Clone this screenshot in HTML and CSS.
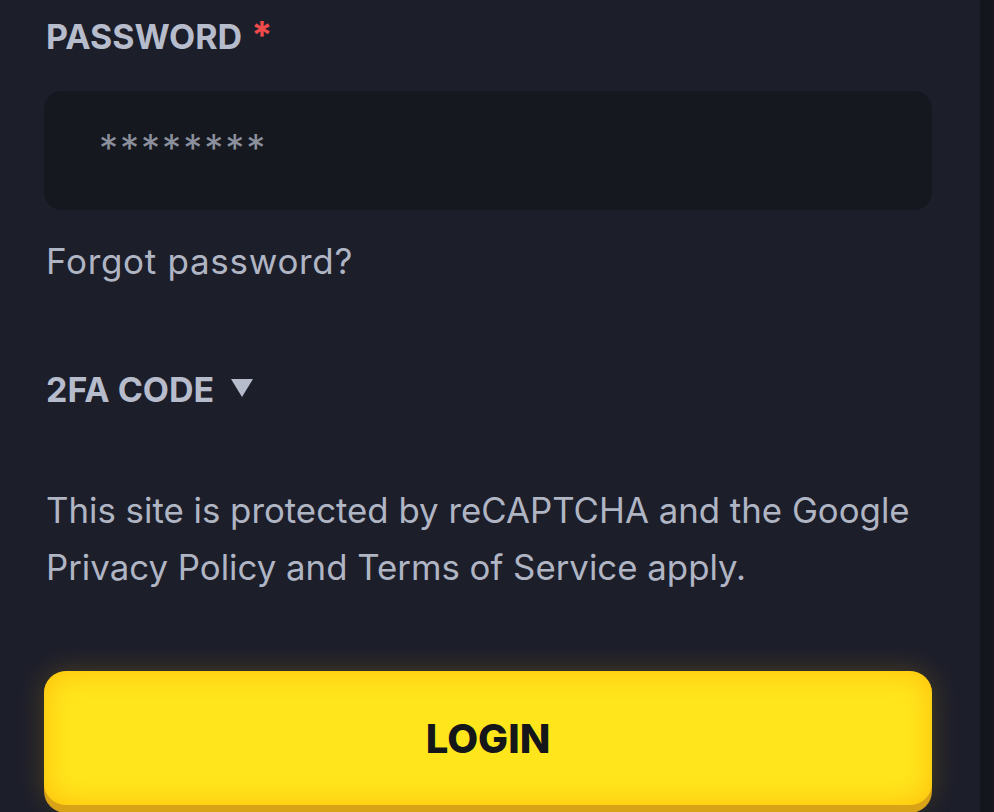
FILE: index.html
```html
<!DOCTYPE html>
<html lang="en">
<head>
    <meta charset="UTF-8">
    <meta name="viewport" content="width=device-width, initial-scale=1.0">
    <title>Login</title>
    <link rel="stylesheet" href="styles.css">
</head>
<body>
    <div class="page">
        <div class="panel">
            <form class="login-form" onsubmit="return false">
                <label class="field-label" for="password">PASSWORD<span class="required">*</span></label>
                <input type="password" id="password" class="field-input" placeholder="********">
                <a href="#" class="forgot-link">Forgot password?</a>
                <div class="twofa-toggle">
                    <span>2FA CODE</span>
                    <svg class="caret" width="22" height="18" viewBox="0 0 22 18"><path d="M0 0 H22 L11 18 Z" fill="#b6bccb"/></svg>
                </div>
                <p class="notice">This site is protected by reCAPTCHA and the Google Privacy Policy and Terms of Service apply.</p>
                <button type="submit" class="login-button">LOGIN</button>
            </form>
        </div>
        <div class="side-strip"></div>
    </div>
</body>
</html>
```

FILE: styles.css
```css
body {
    margin: 0;
    background-color: #1c1e2a;
    font-family: 'Inter', 'Noto Sans', sans-serif;
    color: #b0b5c4;
    overflow: hidden;
}
.page {
    display: flex;
    min-height: 100vh;
}
.panel {
    flex: 1;
    padding: 17px 48px 0 44px;
}
.side-strip {
    width: 14px;
    background-color: #14161e;
}
.login-form {
    display: flex;
    flex-direction: column;
    align-items: flex-start;
}
.field-label {
    font-size: 34px;
    line-height: 40px;
    font-weight: 700;
    color: #b6bccb;
    padding-left: 2px;
}
.required {
    color: #f04a4a;
    margin-left: 9px;
    font-size: 38px;
    line-height: 0;
}
.field-input {
    margin-top: 34px;
    width: 100%;
    height: 119px;
    box-sizing: border-box;
    border: none;
    border-radius: 18px;
    background-color: #161820;
    padding: 0 0 6px 55px;
    font-family: inherit;
    font-size: 38px;
    color: #8b909c;
    outline: none;
}
.field-input::placeholder {
    color: #8b909c;
    letter-spacing: 2px;
}
.forgot-link {
    margin-top: 31px;
    padding-left: 2px;
    font-size: 35px;
    line-height: 40px;
    letter-spacing: 0.7px;
    color: #b0b5c4;
    text-decoration: none;
}
.twofa-toggle {
    margin-top: 89px;
    padding-left: 2px;
    display: flex;
    align-items: center;
    gap: 17px;
    font-size: 34px;
    line-height: 40px;
    font-weight: 700;
    color: #b6bccb;
    cursor: pointer;
}
.caret {
    margin-top: -4px;
}
.notice {
    margin: 72px 0 0;
    padding-left: 2px;
    font-size: 34.8px;
    line-height: 57px;
    color: #b0b5c4;
}
.login-button {
    margin-top: 75px;
    width: 100%;
    height: 134px;
    border: none;
    border-radius: 22px;
    background-color: #ffe61c;
    box-shadow: inset 0 0 30px rgba(255, 160, 0, 0.6), 0 8px 0 #d8a316, 0 0 28px rgba(255, 180, 0, 0.22);
    font-family: inherit;
    font-size: 40px;
    font-weight: 800;
    color: #15161a;
    cursor: pointer;
}
```
